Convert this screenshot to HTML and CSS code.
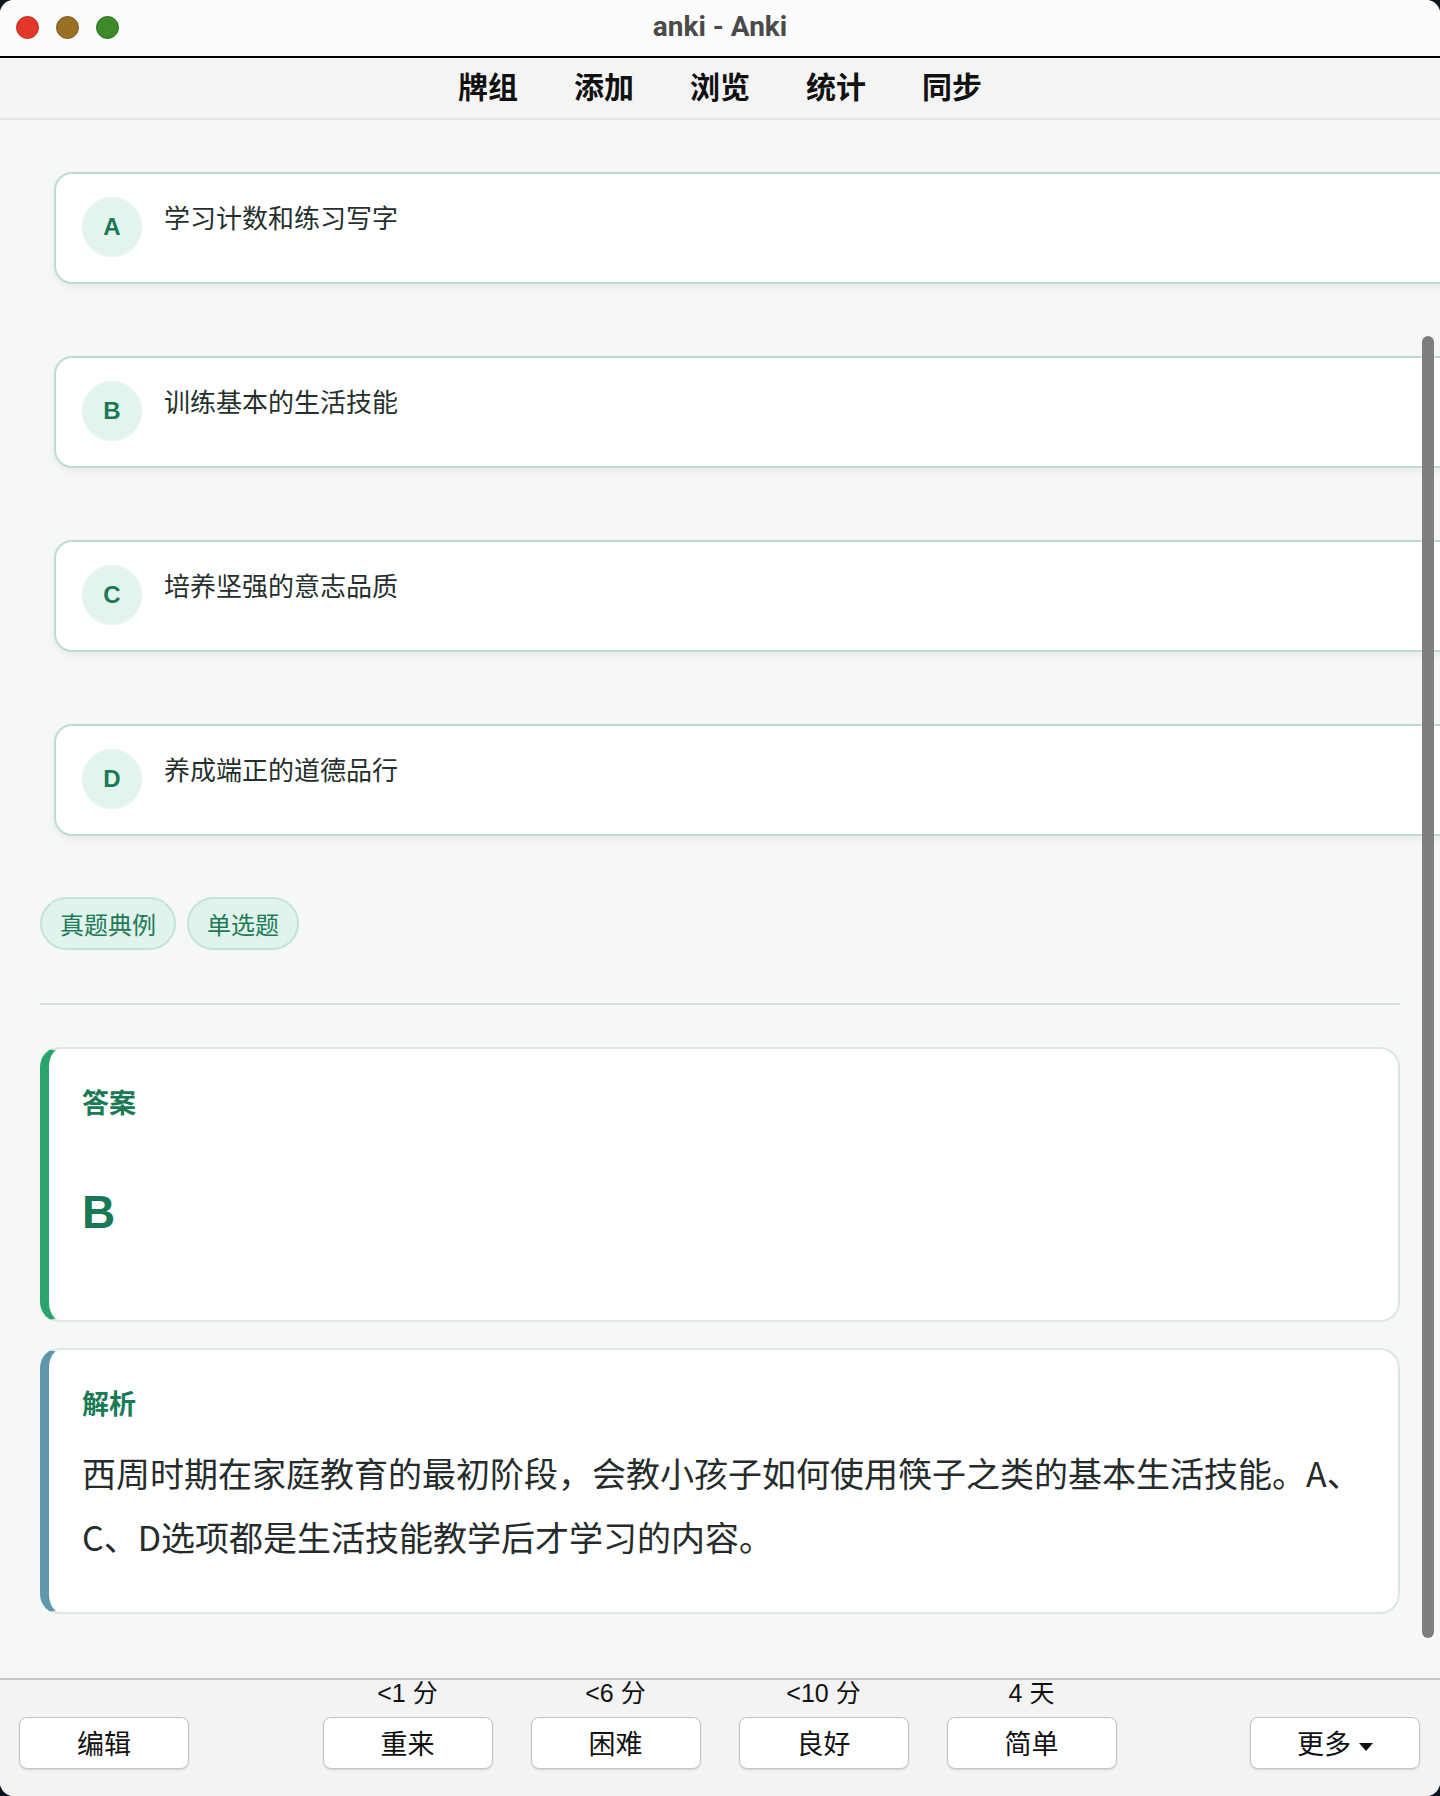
FILE: index.html
```html
<!DOCTYPE html>
<html lang="zh-CN">
<head>
  <meta charset="UTF-8">
  <title>anki - Anki</title>
  <meta name="viewport" content="width=device-width, initial-scale=1.0">
  <link rel="stylesheet" href="styles.css">
</head>
<body>

  <div class="window">

    <header class="titlebar">
      <div class="lights">
        <span class="light red"></span>
        <span class="light yellow"></span>
        <span class="light green"></span>
      </div>
      <div class="title">anki - Anki</div>
    </header>

    <nav class="toolbar">
      <a href="#">牌组</a>
      <a href="#">添加</a>
      <a href="#">浏览</a>
      <a href="#">统计</a>
      <a href="#">同步</a>
    </nav>

    <main class="reviewer">
      <div class="card">

        <ul class="options">
          <li class="option"><span class="opt-key">A</span><span class="opt-text">学习计数和练习写字</span></li>
          <li class="option"><span class="opt-key">B</span><span class="opt-text">训练基本的生活技能</span></li>
          <li class="option"><span class="opt-key">C</span><span class="opt-text">培养坚强的意志品质</span></li>
          <li class="option"><span class="opt-key">D</span><span class="opt-text">养成端正的道德品行</span></li>
        </ul>

        <div class="tags">
          <span class="tag">真题典例</span>
          <span class="tag">单选题</span>
        </div>

        <hr class="divider">

        <section class="panel answer">
          <div class="panel-title">答案</div>
          <div class="answer-key">B</div>
        </section>

        <section class="panel analysis">
          <div class="panel-title">解析</div>
          <p class="analysis-text">西周时期在家庭教育的最初阶段，会教小孩子如何使用筷子之类的基本生活技能。A、C、D选项都是生活技能教学后才学习的内容。</p>
        </section>

      </div>
      <div class="scroll-thumb"></div>
    </main>

    <footer class="bottombar">
      <div class="slot">
        <span class="due"></span>
        <button>编辑</button>
      </div>
      <div class="ease">
        <div class="slot">
          <span class="due">&lt;1 分</span>
          <button>重来</button>
        </div>
        <div class="slot">
          <span class="due">&lt;6 分</span>
          <button>困难</button>
        </div>
        <div class="slot">
          <span class="due">&lt;10 分</span>
          <button>良好</button>
        </div>
        <div class="slot">
          <span class="due">4 天</span>
          <button>简单</button>
        </div>
      </div>
      <div class="slot">
        <span class="due"></span>
        <button class="more">更多</button>
      </div>
    </footer>

  </div>

</body>
</html>
```

FILE: styles.css
```css
body {
  margin: 0;
  background: #0b1520;
  font-family: "Liberation Sans", "Noto Sans CJK SC", sans-serif;
  overflow: hidden;
}

.window {
  height: 1796px;
  display: flex;
  flex-direction: column;
  border-radius: 14px;
  overflow: hidden;
  background: #f6f8f7;
}

/* title bar */
.titlebar {
  position: relative;
  height: 56px;
  flex: none;
  background: #fcfcfc;
  border-bottom: 2px solid #000;
  display: flex;
  align-items: center;
  justify-content: center;
}

.lights {
  position: absolute;
  left: 16px;
  top: 16px;
  display: flex;
  gap: 17px;
}

.light {
  width: 23px;
  height: 23px;
  border-radius: 50%;
  box-sizing: border-box;
}

.red { background: #e0382b; border: 1px solid #c22d22; }
.yellow { background: #9a7026; border: 1px solid #7d5a1c; }
.green { background: #3c8a28; border: 1px solid #2f6f1f; }

.title {
  font-family: Roboto, "Noto Sans CJK SC", sans-serif;
  font-weight: 700;
  font-size: 28px;
  color: #4a4a4a;
  margin-top: -3px;
}

/* main toolbar */
.toolbar {
  height: 62px;
  flex: none;
  box-sizing: border-box;
  padding-bottom: 6px;
  background: #f4f4f4;
  border-bottom: 2px solid #e3e3e3;
  display: flex;
  justify-content: center;
  align-items: center;
  gap: 56px;
}

.toolbar a {
  color: #111;
  text-decoration: none;
  font-family: "Noto Sans CJK SC", sans-serif;
  font-weight: 700;
  font-size: 30px;
}

/* reviewer */
.reviewer {
  position: relative;
  flex: 1;
  overflow: hidden;
}

.card {
  padding: 52px 40px 0 40px;
  font-family: "Noto Sans CJK SC", sans-serif;
}

.options {
  list-style: none;
  margin: 0 -80px 0 14px;
  padding: 0;
}

.option {
  height: 112px;
  box-sizing: border-box;
  margin-bottom: 72px;
  padding: 23px 26px;
  display: flex;
  align-items: flex-start;
  gap: 22px;
  background: #fff;
  border: 2px solid #bcdcd1;
  border-radius: 18px;
  box-shadow: 0 4px 8px rgba(0, 0, 0, 0.05);
}

.option:last-child {
  margin-bottom: 61px;
}

.opt-key {
  width: 60px;
  height: 60px;
  flex: none;
  border-radius: 50%;
  background: #e3f4ee;
  color: #1a7a55;
  font-family: "Liberation Sans", sans-serif;
  font-weight: 700;
  font-size: 24px;
  display: flex;
  align-items: center;
  justify-content: center;
}

.opt-text {
  font-size: 26px;
  line-height: 40px;
  color: #25302c;
}

.tags {
  display: flex;
  gap: 11px;
}

.tag {
  height: 53px;
  box-sizing: border-box;
  padding: 0 18px;
  line-height: 49px;
  border-radius: 27px;
  background: #e0f3ec;
  border: 2px solid #c3e4d8;
  color: #1f7a56;
  font-size: 24px;
}

.divider {
  border: none;
  border-top: 2px solid #d8dfdc;
  margin: 53px 0 42px;
}

.panel {
  background: #fff;
  border: 2px solid #dde6e3;
  border-radius: 20px;
  padding: 35px 24px 0 33px;
  box-sizing: border-box;
}

.answer {
  height: 275px;
  border-left: 9px solid #2aa36e;
  margin-bottom: 26px;
}

.analysis {
  height: 266px;
  border-left: 9px solid #5e96ac;
}

.panel-title {
  font-size: 27px;
  line-height: 36px;
  font-weight: 700;
  color: #1a7a55;
}

.answer-key {
  margin-top: 62px;
  font-family: "Liberation Sans", sans-serif;
  font-size: 46px;
  line-height: 60px;
  font-weight: 700;
  color: #177a55;
}

.analysis-text {
  margin: 20px 0 0;
  font-size: 34px;
  line-height: 64px;
  color: #262c2b;
}

.scroll-thumb {
  position: absolute;
  right: 6px;
  top: 216px;
  width: 12px;
  height: 1302px;
  border-radius: 6px;
  background: #7e7e7e;
}

/* answer buttons */
.bottombar {
  height: 118px;
  flex: none;
  box-sizing: border-box;
  background: #f3f3f3;
  border-top: 2px solid #c8c8c8;
  display: flex;
  justify-content: space-between;
  padding: 0 20px 0 19px;
}

.ease {
  display: flex;
  gap: 38px;
  margin-left: 133px;
  margin-right: 133px;
}

.slot {
  display: flex;
  flex-direction: column;
  align-items: center;
}

.due {
  height: 26px;
  line-height: 26px;
  font-size: 25px;
  color: #111;
  margin-bottom: 11px;
}

.bottombar button {
  width: 170px;
  height: 52px;
  background: #fff;
  border: 1px solid #c4c4c4;
  border-radius: 8px;
  box-shadow: 0 1px 2px rgba(0, 0, 0, 0.12);
  font-family: "Noto Sans CJK SC", sans-serif;
  font-size: 27px;
  line-height: 48px;
  color: #111;
  padding: 0;
}

.more::after {
  content: "";
  display: inline-block;
  margin-left: 8px;
  vertical-align: middle;
  border-left: 7px solid transparent;
  border-right: 7px solid transparent;
  border-top: 8px solid #111;
}
```
